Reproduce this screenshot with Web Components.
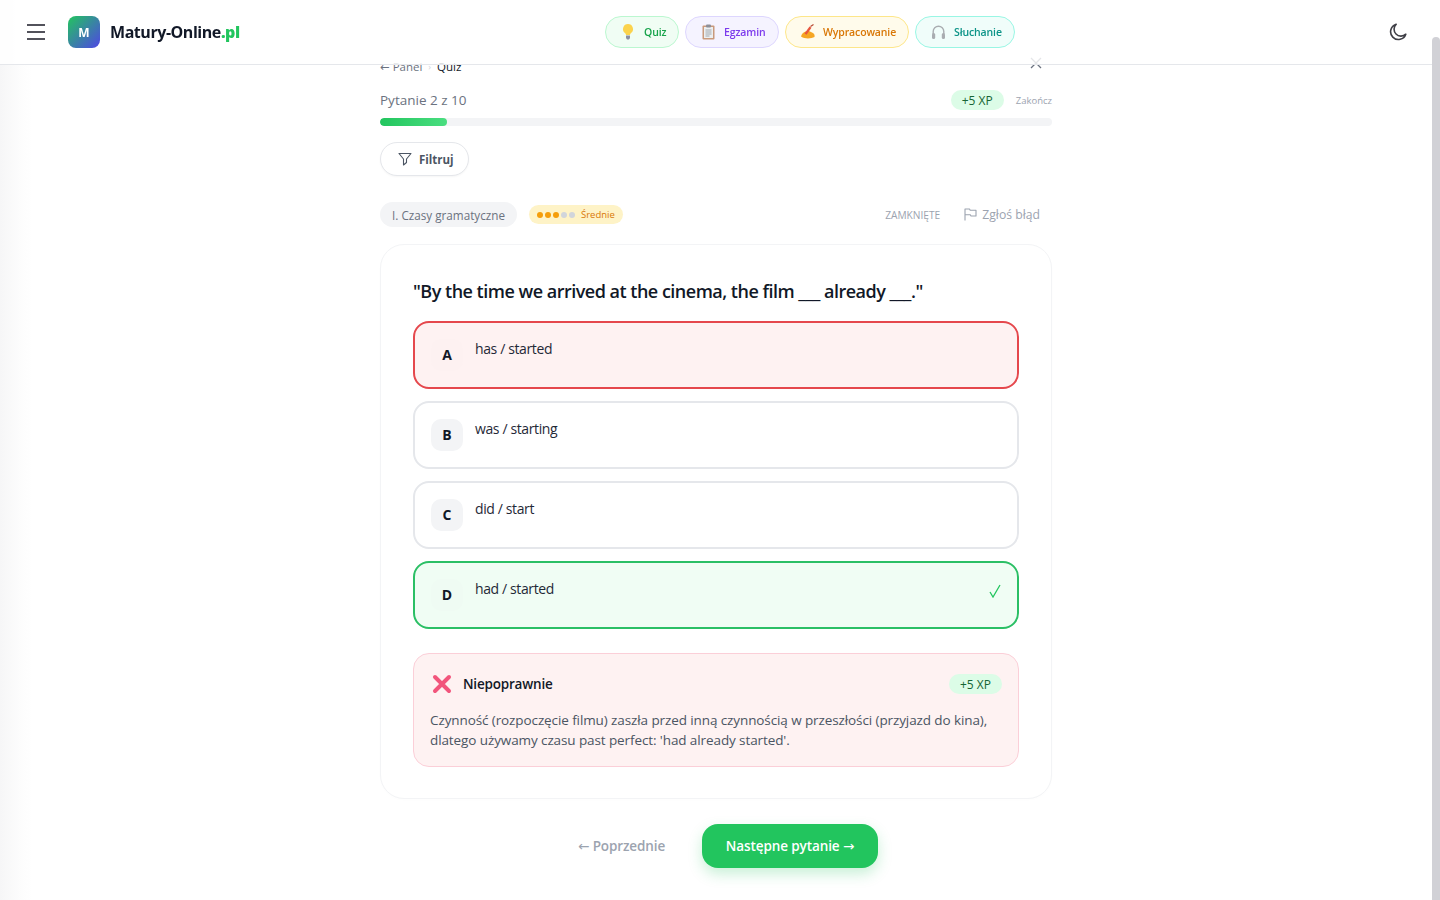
<!DOCTYPE html>
<html lang="pl"><head><meta charset="utf-8"><title>Quiz</title>
<style>
html,body{margin:0;height:900px;overflow:hidden}
body{font-family:"Open Sans","Noto Sans",sans-serif;color:#111827;background:linear-gradient(to right,#f6f6f7 0,#fdfdfd 22px,#fff 32px)}
</style></head><body>
<app-header></app-header>
<quiz-page>
  <quiz-option letter="A" state="wrong">has / started</quiz-option>
  <quiz-option letter="B">was / starting</quiz-option>
  <quiz-option letter="C">did / start</quiz-option>
  <quiz-option letter="D" state="right">had / started</quiz-option>
</quiz-page>
<page-scrollbar></page-scrollbar>
<script>
function def(name,html,init){customElements.define(name,class extends HTMLElement{constructor(){super();const s=this.attachShadow({mode:'open'});s.innerHTML=html;}connectedCallback(){init&&init(this)}})}

def('nav-pill',`<style>
:host{display:inline-flex;align-items:center;box-sizing:border-box;height:32px;border-radius:16px;border:1px solid var(--b);background:var(--bg);color:var(--c);font-size:10.5px;font-weight:600;letter-spacing:-.13px;white-space:nowrap;padding:0 12px 0 13px;gap:8px}
::slotted(svg){flex:none}
</style><slot name="i"></slot><slot></slot>`);

def('xp-pill',`<style>
:host{display:inline-flex;align-items:center;justify-content:center;box-sizing:border-box;width:53px;height:20px;border-radius:10px;background:#dcfce7;color:#166534;font-size:12px;font-weight:500;white-space:nowrap}
</style><slot></slot>`);

def('app-header',`<style>
:host{position:fixed;left:0;top:0;right:0;height:65px;box-sizing:border-box;border-bottom:1px solid #e5e7eb;background:rgba(255,255,255,.82);display:flex;align-items:center;z-index:5;padding:0 33px 0 27px}
.burger{width:18px;height:16px;display:block;flex:none}
.logo{width:32px;height:32px;border-radius:8px;background:linear-gradient(135deg,#22c55e,#4f46e5);color:#fff;font-size:12px;font-weight:700;display:flex;align-items:center;justify-content:center;margin-left:23px;flex:none}
.name{margin-left:10px;font-size:16px;font-weight:700;color:#111827;letter-spacing:-.45px;white-space:nowrap;width:130px}
.name b{color:#22c55e}
nav{display:flex;gap:6px;margin-left:365px}
.moon{margin-left:auto;display:block}
</style>
<svg class="burger" viewBox="0 0 18 16" fill="none" stroke="#52525b" stroke-width="2"><path d="M0 1h18M0 8h18M0 15h18"/></svg>
<div class="logo">M</div>
<div class="name">Matury-Online<b>.pl</b></div>
<nav>
<nav-pill style="--b:#bbf7d0;--bg:#f0fdf4;--c:#16a34a;width:74px;padding-left:15px;gap:9px"><svg slot="i" width="14" height="18" viewBox="0 0 14 18"><path d="M7 1a5 5 0 0 1 3 9c-.7.6-1 1.2-1 2H5c0-.8-.3-1.400-1-2A5 5 0 0 1 7 1z" fill="#fbd34d"/><path d="M5 12.500h4V15l-1 1.500H6L5 15z" fill="#8b8fa3"/></svg>Quiz</nav-pill>
<nav-pill style="--b:#ddd6fe;--bg:#f5f3ff;--c:#7c3aed;width:94px;padding-left:15px;gap:8px"><svg slot="i" width="15" height="16" viewBox="0 0 15 16"><rect x="1.500" y="1.500" width="12" height="14" rx="1" fill="#c99a7c"/><rect x="3" y="3" width="9" height="11" fill="#eceff1"/><rect x="5" y=".5" width="5" height="3" rx="1" fill="#8d8f98"/><path d="M4.500 6h6M4.500 8h6M4.500 10h6M4.500 12h4" stroke="#9aa0a8" stroke-width=".9"/></svg>Egzamin</nav-pill>
<nav-pill style="--b:#fde68a;--bg:#fffbeb;--c:#d97706;width:124px;padding-left:14px;gap:7px"><svg slot="i" width="16" height="16" viewBox="0 0 16 16"><path d="M1 12.500c.6-2.600 2.500-4.500 4.500-5l2.500-1 5 2.500c1.200.8 2 2 1.500 4-3 1.500-9 2.500-13.500-.5z" fill="#f6a623"/><path d="M4.500 9.500l5-7 2 1.300-5 7z" fill="#e8553e"/><path d="M10.500 2.500l3-2" stroke="#b5452f" stroke-width="1.200"/></svg>Wypracowanie</nav-pill>
<nav-pill style="--b:#99f6e4;--bg:#f0fdfa;--c:#0d9488;width:100px;padding-left:15px;gap:8px"><svg slot="i" width="15" height="16" viewBox="0 0 15 16" fill="none"><path d="M2.200 10V7.500a5.300 5.300 0 0 1 10.600 0V10" stroke="#a9adb1" stroke-width="1.400"/><rect x="1" y="9" width="3.200" height="6" rx="1.500" fill="#a9adb1"/><rect x="10.800" y="9" width="3.200" height="6" rx="1.500" fill="#a9adb1"/></svg>Słuchanie</nav-pill>
</nav>
<svg class="moon" width="18" height="18" viewBox="0 0 18 18" fill="none" stroke="#3f3f46" stroke-width="1.600" stroke-linejoin="round"><path d="M7.200 1.200A7.800 7.800 0 1 0 16.800 11.200 6.800 6.800 0 0 1 7.200 1.200z"/></svg>`);

def('quiz-option',`<style>
:host{display:flex;box-sizing:border-box;height:68px;border:2px solid #e5e7eb;border-radius:16px;background:#fff;padding:16px;gap:12px;font-size:14px;line-height:20px;color:#1f2937;letter-spacing:-.38px}
:host([state=wrong]){border-color:#e5484d;background:#fef2f2}
:host([state=right]){border-color:#2bbf65;background:#f0fdf4}
.l{width:32px;height:32px;border-radius:10px;background:#f3f4f6;display:flex;align-items:center;justify-content:center;font-weight:700;font-size:14px;color:#111827;flex:none;letter-spacing:0}
:host([state=wrong]) .l{background:#fdf1f1}
:host([state=right]) .l{background:#effbf3}
.t{flex:1}
.c{display:none;flex:none;margin:5px -1px 0 0}
:host([state=right]) .c{display:block}
</style><div class="l"></div><div class="t"><slot></slot></div><svg class="c" width="14" height="14" viewBox="0 0 14 14" fill="none" stroke="#22c55e" stroke-width="1.300"><path d="M2 8l3 5 7-12"/></svg>`,
el=>{el.shadowRoot.querySelector('.l').textContent=el.getAttribute('letter')});

def('quiz-page',`<style>
:host{display:block;width:672px;margin:0 auto;position:relative;left:-4px;padding-top:58px;font-size:14px}
.ar{font-family:"DejaVu Sans",sans-serif;font-weight:400}
.crumb{display:flex;align-items:center;height:17px;font-size:11.500px;color:#6b7280;gap:6px}
.crumb b{font-weight:500;color:#111827}
.crumb i{font-style:normal;color:#d1d5db;font-size:9px}
.crumb svg{margin:-8px 10px 0 auto}
.top{display:flex;align-items:center;margin-top:15px;height:20px}
.top .q{color:#6b7280;font-size:13.500px}
.top xp-pill{margin-left:auto}
.top .end{margin-left:12px;font-size:9.500px;color:#9ca3af}
.bar{height:8px;border-radius:4px;background:#f3f4f6;margin-top:8px;overflow:hidden}
.bar div{width:10%;height:100%;border-radius:4px;background:linear-gradient(to right,#22c55e,#4ade80)}
.filter{display:flex;align-items:center;box-sizing:border-box;gap:7px;width:89px;height:34px;margin-top:16px;padding-left:17px;border:1px solid #e5e7eb;border-radius:17px;background:#fff;font-size:11.500px;font-weight:700;color:#4b5563;box-shadow:0 1px 2px rgba(0,0,0,.04)}
.meta{display:flex;align-items:center;margin-top:26px;height:25px;padding-right:12px}
.tag{height:25px;width:137px;border-radius:13px;background:#f3f4f6;color:#6b7280;font-size:11.700px;font-weight:500;display:flex;align-items:center;justify-content:center;box-sizing:border-box;white-space:nowrap}
.diff{margin-left:12px;height:19px;width:94px;box-sizing:border-box;border-radius:10px;background:#fef3c7;color:#d97706;font-size:9.500px;font-weight:500;display:flex;align-items:center;padding-left:8px}
.dots{display:flex;gap:2px;margin-right:6px}
.dots span{width:6px;height:6px;border-radius:50%;background:#f59e0b}
.dots span.o{background:#d1d5db}
.closed{margin-left:auto;font-size:10.200px;color:#9ca3af}
.report{margin-left:24px;display:flex;align-items:center;gap:5px;font-size:12.200px;font-weight:500;color:#9ca3af}
.card{margin-top:17px;box-sizing:border-box;height:555px;border:1px solid #f3f4f6;border-radius:24px;background:#fff;padding:32px;box-shadow:0 1px 3px rgba(0,0,0,.01)}
h2{margin:0 0 16px;font-size:18px;line-height:28px;font-weight:600;color:#111827;letter-spacing:-.5px;white-space:nowrap}
.opts{display:flex;flex-direction:column;gap:12px}
.fb{margin-top:24px;box-sizing:border-box;height:114px;border:1px solid #fbcfd8;border-radius:16px;background:#fef2f2;padding:19px 16px 0}
.fbh{display:flex;align-items:center;height:22px}
.fbh svg{margin-left:2px}
.fbh b{margin-left:11px;font-size:13.500px;font-weight:600;color:#111827;letter-spacing:-.2px}
.fbh xp-pill{margin-left:auto}
.fb p{margin:15px 0 0;font-size:13.500px;line-height:20px;color:#4b5563;letter-spacing:-.1px}
.act{display:flex;justify-content:center;align-items:center;gap:36px;margin-top:25px;padding-left:24px}
.prev{font-size:13.500px;font-weight:600;color:#9ca3af;letter-spacing:-.1px;width:88px;white-space:nowrap}
.next{width:176px;height:44px;box-sizing:border-box;border-radius:16px;background:#22c55e;color:#fff;font-size:13.500px;font-weight:600;display:flex;align-items:center;justify-content:center;box-shadow:0 6px 14px rgba(34,197,94,.25);white-space:pre;letter-spacing:-.1px}
</style>
<div class="crumb"><span><span class="ar">←</span> Panel</span><i>›</i><b>Quiz</b><svg width="12" height="12" viewBox="0 0 12 12" fill="none" stroke="#6b7280" stroke-width="1.300"><path d="M1 1l10 10M11 1L1 11"/></svg></div>
<div class="top"><span class="q">Pytanie 2 z 10</span><xp-pill>+5 XP</xp-pill><span class="end">Zakończ</span></div>
<div class="bar"><div></div></div>
<div class="filter"><svg width="14" height="14" viewBox="0 0 14 14" fill="none" stroke="#4b5563" stroke-width="1.100" stroke-linejoin="round"><path d="M1 1.500h12L8.500 7v3.500L5.500 13V7z"/></svg>Filtruj</div>
<div class="meta"><div class="tag">I. Czasy gramatyczne</div><div class="diff"><span class="dots"><span></span><span></span><span></span><span class="o"></span><span class="o"></span></span>Średnie</div><span class="closed">ZAMKNIĘTE</span><span class="report"><svg width="13" height="13" viewBox="0 0 13 13" fill="none" stroke="#9ca3af" stroke-width="1.100" stroke-linejoin="round"><path d="M1 12.500V1h4.500l.7 1.200H12V8H7l-.7-1.200H1"/></svg>Zgłoś błąd</span></div>
<div class="card">
<h2>"By the time we arrived at the cinema, the film ___ already ___."</h2>
<div class="opts"><slot></slot></div>
<div class="fb"><div class="fbh"><svg width="20" height="20" viewBox="0 0 20 20" fill="none" stroke="#f2557c" stroke-width="4" stroke-linecap="round"><path d="M3 3l14 14M17 3L3 17"/></svg><b>Niepoprawnie</b><xp-pill>+5 XP</xp-pill></div>
<p>Czynność (rozpoczęcie filmu) zaszła przed inną czynnością w przeszłości (przyjazd do kina), dlatego używamy czasu past perfect: 'had already started'.</p></div>
</div>
<div class="act"><span class="prev"><span class="ar">←</span> Poprzednie</span><div class="next">Następne pytanie <span class="ar">→</span></div></div>`);

def('page-scrollbar',`<style>
:host{position:fixed;right:0;top:37px;bottom:0;width:8px;background:#d1d1d6;border-radius:4px 4px 0 0;z-index:6;display:block}
</style>`);
</script>
</body></html>
